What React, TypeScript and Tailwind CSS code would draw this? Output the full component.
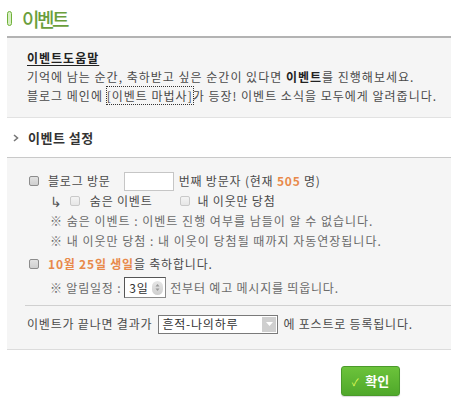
import React from "react";

function Check({ light }: { light?: boolean }) {
  return (
    <span
      className={
        light
          ? "inline-block w-[10px] h-[10px] rounded-[2px] border border-[#c9c9c9] bg-gradient-to-b from-[#f4f4f4] to-[#e6e6e6]"
          : "inline-block w-[10px] h-[10px] rounded-[2px] border border-[#8c8c8c] bg-gradient-to-b from-[#e2e2e2] to-[#cfcfcf]"
      }
    />
  );
}

export default function App() {
  return (
    <div
      className="w-[451px] h-[415px] bg-white text-[12px] text-[#4a4a4a] tracking-[0.8px] overflow-hidden"
      style={{ fontFamily: '"Noto Sans CJK KR", "Noto Sans", sans-serif' }}
    >
      {/* Header */}
      <div className="flex items-center h-[36px] pl-[7px]">
        <span className="inline-block w-[5px] h-[15px] rounded-[3px] border border-[#6fb13a] bg-[#d8efc4]" />
        <span className="ml-[10px] text-[19px] leading-none tracking-[-2.5px] text-[#6a9e3c] font-medium">
          이벤트
        </span>
      </div>

      {/* Help box */}
      <div className="ml-[7px] border-t-2 border-[#b3b3b3] bg-[#f5f5f5] border-b border-b-[#e2e2e2] pt-[10px] pb-[12px] pl-[20px] tracking-[1px]">
        <div className="leading-[19px] font-bold text-[#222] underline underline-offset-2">이벤트도움말</div>
        <div className="leading-[19px]">
          기억에 남는 순간, 축하받고 싶은 순간이 있다면 <b className="text-[#222]">이벤트</b>를 진행해보세요.
        </div>
        <div className="leading-[19px]">
          블로그 메인에{" "}
          <span className="outline outline-1 outline-dotted outline-[#333]">[이벤트 마법사]</span>가 등장! 이벤트 소식을 모두에게 알려줍니다.
        </div>
      </div>

      {/* Section header */}
      <div className="flex items-center h-[39px] pl-[13px]">
        <svg width="6" height="8" viewBox="0 0 6 8">
          <path d="M1 1 L4.5 4 L1 7" stroke="#777" strokeWidth="1.6" fill="none" />
        </svg>
        <span className="ml-[9px] text-[13px] font-bold text-[#333] tracking-[0.5px]">이벤트 설정</span>
      </div>

      {/* Settings panel */}
      <div className="ml-[7px] border-t border-[#c9c9c9] border-b border-b-[#dcdcdc] bg-[#f5f5f5] pt-[13px] pb-[15px]">
        <div className="flex items-center h-[20px] pl-[22px]">
          <Check />
          <span className="ml-[9px]">블로그 방문</span>
          <span className="ml-[13px] inline-block w-[50px] h-[19px] bg-white border border-[#c6c6c6]" />
          <span className="ml-[5px]">
            번째 방문자 (현재 <b className="text-[#e8894a]">505</b> 명)
          </span>
        </div>
        <div className="flex items-center h-[20px] pl-[43px]">
          <span className="text-[#555] text-[14px]">↳</span>
          <span className="ml-[7px] flex items-center"><Check light /></span>
          <span className="ml-[10px]">숨은 이벤트</span>
          <span className="ml-[27px] flex items-center"><Check light /></span>
          <span className="ml-[8px]">내 이웃만 당첨</span>
        </div>
        <div className="flex items-center h-[20px] pl-[43px] text-[#6a6a6a] tracking-[1px]">
          ※ 숨은 이벤트 : 이벤트 진행 여부를 남들이 알 수 없습니다.
        </div>
        <div className="flex items-center h-[20px] pl-[43px] text-[#6a6a6a] tracking-[1px]">
          ※ 내 이웃만 당첨 : 내 이웃이 당첨될 때까지 자동연장됩니다.
        </div>
        <div className="flex items-center h-[20px] mt-[3px] pl-[22px]">
          <Check />
          <span className="ml-[9px]">
            <b className="text-[#e8894a]">10월 25일 생일</b>을 축하합니다.
          </span>
        </div>
        <div className="flex items-center h-[21px] mt-[3px] pl-[43px] text-[#6a6a6a]">
          <span>※ 알림일정 :</span>
          <span className="ml-[3px] flex items-center w-[42px] h-[21px] bg-white border border-[#8a8a8a] border-t-[#555] border-l-[#555]">
            <span className="ml-[4px] text-[#333]">3일</span>
            <span className="ml-auto mr-[2px] flex items-center justify-center w-[11px] h-[14px] rounded-full bg-gradient-to-b from-[#e6e6e6] to-[#cfcfcf]">
              <svg width="5" height="9" viewBox="0 0 5 9">
                <path d="M0.5 3.5 L2.5 1 L4.5 3.5 Z M0.5 5.5 L2.5 8 L4.5 5.5 Z" fill="#9a9a9a" />
              </svg>
            </span>
          </span>
          <span className="ml-[4px]">전부터 예고 메시지를 띄웁니다.</span>
        </div>
        <div className="ml-[18px] mt-[7px] border-t border-[#d0d0d0]" />
        <div className="flex items-center h-[20px] mt-[8px] pl-[20px]">
          <span>이벤트가 끝나면 결과가</span>
          <span className="ml-[6px] flex items-center w-[120px] h-[19px] bg-white border border-[#7a7a7a]">
            <span className="ml-[3px] text-[#333]">흔적-나의하루</span>
            <span className="ml-auto mr-[1px] flex items-center justify-center w-[14px] h-[15px] bg-[#cfcfcf]">
              <svg width="7" height="4" viewBox="0 0 7 4">
                <path d="M0 0 L7 0 L3.5 4 Z" fill="#fff" />
              </svg>
            </span>
          </span>
          <span className="ml-[5px]">에 포스트로 등록됩니다.</span>
        </div>
      </div>

      {/* Button */}
      <div className="flex justify-end pr-[51px] mt-[16px]">
        <button className="flex items-center justify-center w-[59px] h-[30px] rounded-[3px] border border-[#4a9a2a] bg-gradient-to-b from-[#6cc33b] to-[#4fa82a] shadow-[0_1px_1px_rgba(0,0,0,0.15)]">
          <span className="text-[#e8ff5a] text-[10px] mr-[6px]">✓</span>
          <span className="text-white font-bold text-[13px] tracking-normal">확인</span>
        </button>
      </div>
    </div>
  );
}
